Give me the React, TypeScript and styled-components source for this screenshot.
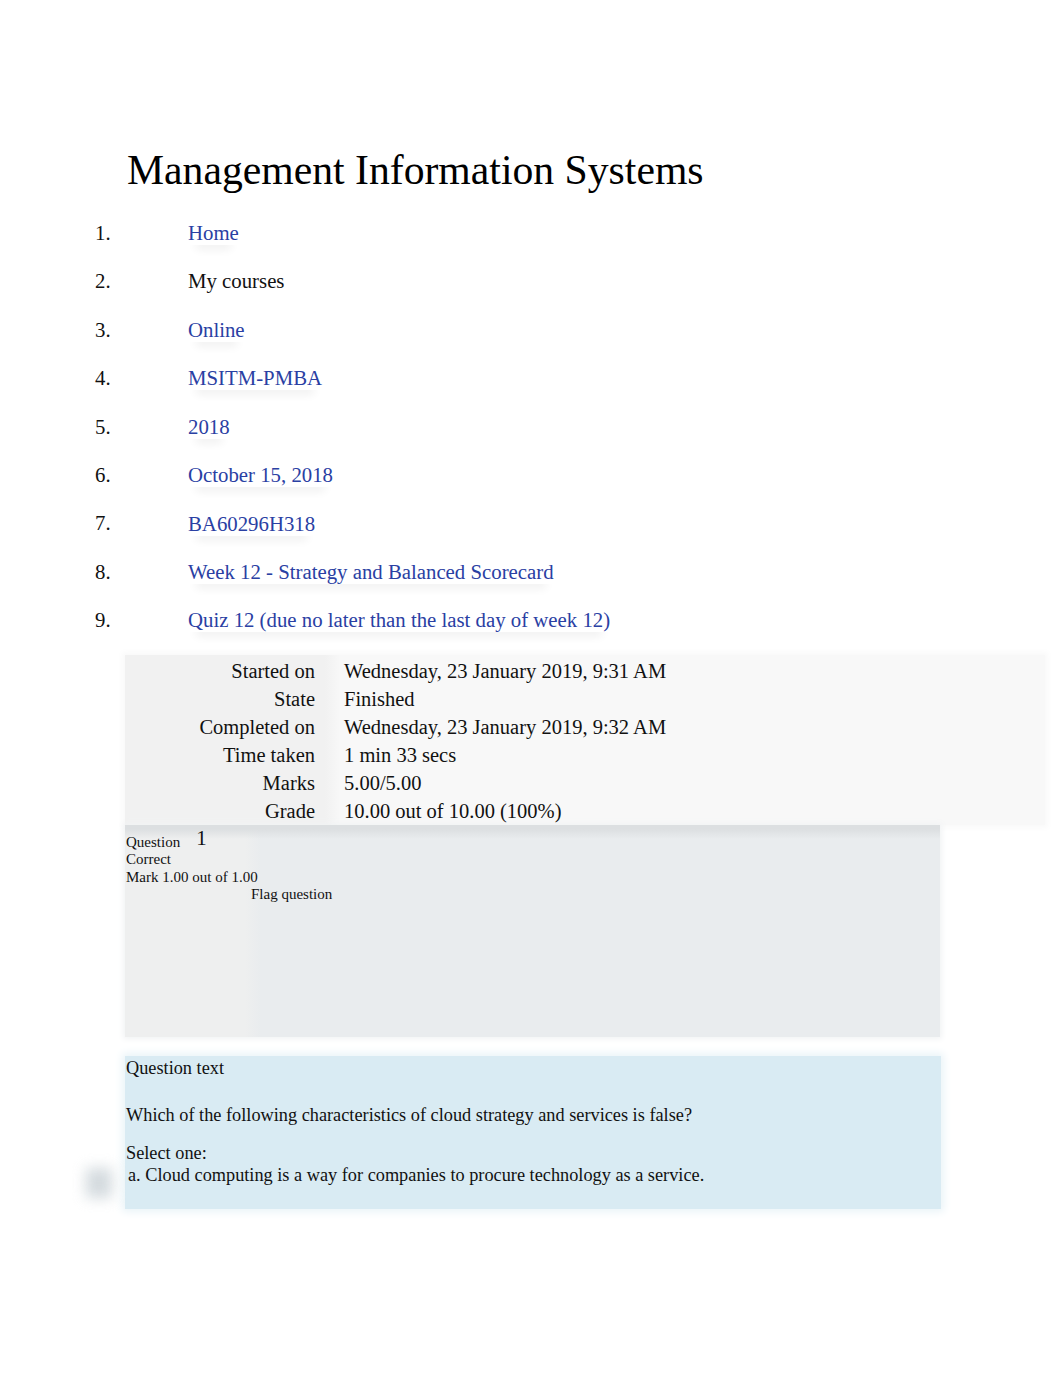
import React from 'react';
import styled, { createGlobalStyle } from 'styled-components';

interface Crumb {
  label: string;
  link: boolean;
}

const crumbs: Crumb[] = [
  { label: 'Home', link: true },
  { label: 'My courses', link: false },
  { label: 'Online', link: true },
  { label: 'MSITM-PMBA', link: true },
  { label: '2018', link: true },
  { label: 'October 15, 2018', link: true },
  { label: 'BA60296H318', link: true },
  { label: 'Week 12 - Strategy and Balanced Scorecard', link: true },
  { label: 'Quiz 12 (due no later than the last day of week 12)', link: true },
];

const summary: [string, string][] = [
  ['Started on', 'Wednesday, 23 January 2019, 9:31 AM'],
  ['State', 'Finished'],
  ['Completed on', 'Wednesday, 23 January 2019, 9:32 AM'],
  ['Time taken', '1 min 33 secs'],
  ['Marks', '5.00/5.00'],
  ['Grade', '10.00 out of 10.00 (100%)'],
];

const GlobalStyle = createGlobalStyle`
  body {
    margin: 0;
    background: #fff;
    font-family: "Liberation Serif", "Times New Roman", serif;
    color: #111;
  }
`;

const Page = styled.div`
  padding: 146px 0 160px 95px;
`;

const Title = styled.h1`
  margin: 0 0 15px 32px;
  font-size: 41.7px;
  line-height: 48px;
  font-weight: normal;
  color: #000;
`;

const Breadcrumb = styled.ol`
  list-style: none;
  margin: 0;
  padding: 0;
`;

const Crumb = styled.li`
  display: flex;
  font-size: 20.8px;
  line-height: 48.4px;
`;

const Num = styled.span`
  width: 93px;
  color: #111;
`;

const CrumbLink = styled.a`
  color: #2a40a3;
  text-decoration: none;
  line-height: 24px;
  align-self: center;
  box-shadow: 0 12px 10px -8px rgba(0, 0, 0, 0.07);
`;

const CrumbText = styled.span`
  color: #111;
`;

const Summary = styled.div`
  margin: 10px 0 0 30px;
  width: 920px;
  padding-top: 2px;
  background: linear-gradient(to right, #f1f1f1 0, #f1f1f1 200px, #f8f8f8 215px);
  box-shadow: 0 0 6px 3px #f9f9f9;
  font-size: 20.5px;
  line-height: 28px;
`;

const SummaryRow = styled.div`
  display: grid;
  grid-template-columns: 210px 1fr;
`;

const Label = styled.div`
  text-align: right;
  padding-right: 20px;
`;

const Value = styled.div`
  padding-left: 9px;
`;

const QuestionInfo = styled.div`
  margin-left: 30px;
  width: 815px;
  height: 203px;
  padding-top: 9px;
  background:
    linear-gradient(to bottom, #dcdfe1 0, #dcdfe1 4px, rgba(233, 236, 238, 0) 14px),
    linear-gradient(to right, #eeefef 0, #eeefef 120px, #e9ecee 136px);
  box-shadow: 0 0 6px 2px #f1f3f4;
  font-size: 15px;
  line-height: 17.5px;
`;

const InfoLine = styled.div<{ $indent?: number }>`
  padding-left: ${props => props.$indent ?? 1}px;
`;

const QuestionNo = styled.span`
  font-size: 21px;
  line-height: 0;
  margin-left: 16px;
  position: relative;
  top: -2px;
`;

const QuestionText = styled.div`
  margin: 19px 0 0 30px;
  width: 815px;
  padding: 1px 0 23px 1px;
  background: #d9ebf3;
  box-shadow: 0 0 8px 3px #eaf4f8;
  font-size: 18.3px;
  line-height: 22px;
`;

const Prompt = styled.div`
  margin-top: 25px;
`;

const SelectOne = styled.div`
  margin-top: 16px;
`;

const Answer = styled.div`
  display: flex;
  align-items: flex-start;
  margin-left: 2px;
`;

const RadioGhost = styled.span`
  flex: none;
  width: 26px;
  height: 30px;
  margin: 0 16px -8px -42px;
  position: relative;
  top: 4px;
  background: #c5ced3;
  filter: blur(7px);
  opacity: 0.75;
`;

const App: React.FC = () => {
  return (
    <Page>
      <GlobalStyle />
      <Title>Management Information Systems</Title>
      <Breadcrumb>
        {crumbs.map((crumb, i) => (
          <Crumb key={crumb.label}>
            <Num>{i + 1}.</Num>
            {crumb.link ? (
              <CrumbLink href="#">{crumb.label}</CrumbLink>
            ) : (
              <CrumbText>{crumb.label}</CrumbText>
            )}
          </Crumb>
        ))}
      </Breadcrumb>

      <Summary>
        {summary.map(([label, value]) => (
          <SummaryRow key={label}>
            <Label>{label}</Label>
            <Value>{value}</Value>
          </SummaryRow>
        ))}
      </Summary>

      <QuestionInfo>
        <InfoLine>
          Question<QuestionNo>1</QuestionNo>
        </InfoLine>
        <InfoLine>Correct</InfoLine>
        <InfoLine>Mark 1.00 out of 1.00</InfoLine>
        <InfoLine $indent={126}>Flag question</InfoLine>
      </QuestionInfo>

      <QuestionText>
        <div>Question text</div>
        <Prompt>Which of the following characteristics of cloud strategy and services is false?</Prompt>
        <SelectOne>Select one:</SelectOne>
        <Answer>
          <RadioGhost />
          a. Cloud computing is a way for companies to procure technology as a service.
        </Answer>
      </QuestionText>
    </Page>
  );
};

export default App;
